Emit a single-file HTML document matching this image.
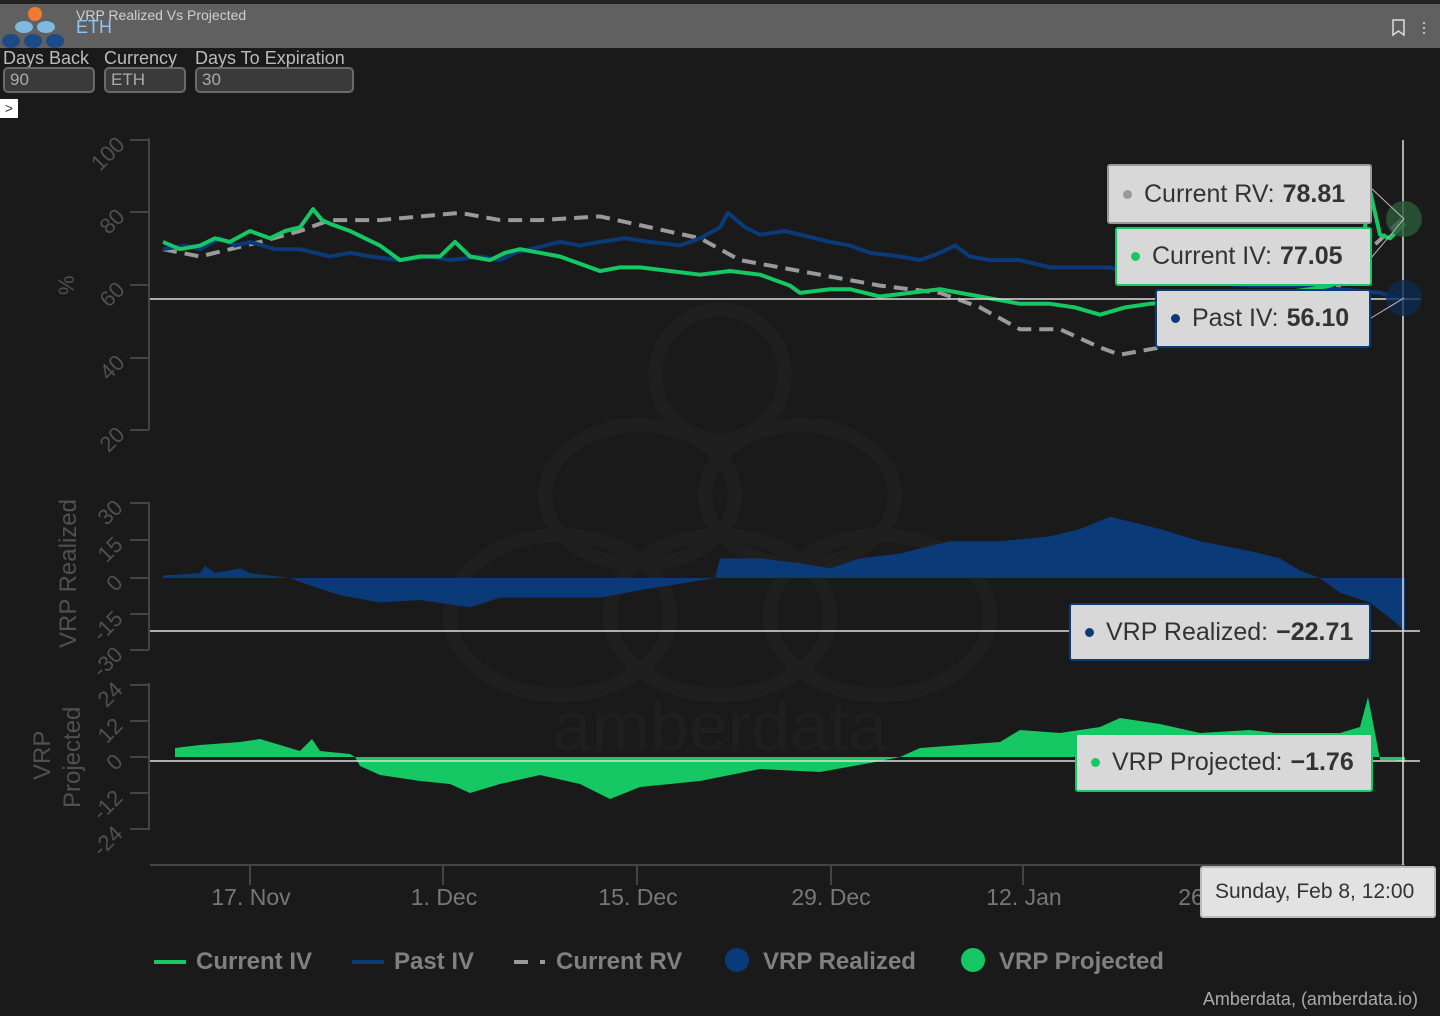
<!DOCTYPE html>
<html><head><meta charset="utf-8"><style>
html,body{margin:0;padding:0;width:1440px;height:1016px;overflow:hidden;background:#1a1a1a;font-family:"Liberation Sans",sans-serif}
.hdr{position:absolute;left:0;top:4px;width:1440px;height:44px;background:#606060}
.top{position:absolute;left:0;top:0;width:1440px;height:4px;background:#222}
.t1{position:absolute;left:76px;top:7px;font-size:14px;color:#d0d0d0}
.t2{position:absolute;left:76px;top:17px;font-size:18px;color:#8cc4f4}
.lbl{position:absolute;top:48px;font-size:18px;color:#bbb}
.inp{position:absolute;top:67px;height:26px;border:2px solid #6a6a6a;border-radius:5px;background:#3a3a3a;color:#aaa;font-size:17px;box-sizing:border-box;padding-left:5px;line-height:22px}
.arr{position:absolute;left:0;top:99px;width:18px;height:19px;background:#fff;color:#333;font-size:14px;text-align:center;line-height:18px}
.tip{position:absolute;background:#d8d8d8;border:2px solid #999;border-radius:3px;box-sizing:border-box;font-size:25px;color:#333;padding-left:14px;display:flex;align-items:center;white-space:nowrap;overflow:hidden}
.tip b{margin-left:8px}
.dot{display:inline-block;width:9px;height:9px;border-radius:50%;margin-right:12px;flex:none}
</style></head><body>
<div class="top"></div>
<div class="hdr"></div>
<svg style="position:absolute;left:0;top:0" width="70" height="50">
<circle cx="35" cy="14" r="7" fill="#f07b30"/>
<ellipse cx="24" cy="27" rx="9" ry="6" fill="#7fb8e0"/><ellipse cx="46" cy="27" rx="9" ry="6" fill="#7fb8e0"/>
<ellipse cx="11" cy="41" rx="9" ry="7" fill="#1c4a86"/><ellipse cx="33" cy="41" rx="9" ry="7" fill="#1c4a86"/><ellipse cx="55" cy="41" rx="9" ry="7" fill="#1c4a86"/>
</svg>
<div class="t1">VRP Realized Vs Projected</div>
<div class="t2">ETH</div>
<svg style="position:absolute;left:1390px;top:18px" width="40" height="20"><path d="M3 2h11v15l-5.5-4-5.5 4z" fill="none" stroke="#ddd" stroke-width="1.5"/><circle cx="34" cy="5" r="1" fill="#ddd"/><circle cx="34" cy="10" r="1" fill="#ddd"/><circle cx="34" cy="15" r="1" fill="#ddd"/></svg>
<div class="lbl" style="left:3px">Days Back</div>
<div class="lbl" style="left:104px">Currency</div>
<div class="lbl" style="left:195px">Days To Expiration</div>
<div class="inp" style="left:3px;width:92px">90</div>
<div class="inp" style="left:104px;width:82px">ETH</div>
<div class="inp" style="left:195px;width:159px">30</div>
<div class="arr">&gt;</div>

<svg style="position:absolute;left:0;top:0" width="1440" height="1016">
<g fill="none" stroke="#1f1f1f" stroke-width="14">
<circle cx="720" cy="375" r="65"/><ellipse cx="640" cy="495" rx="95" ry="70"/><ellipse cx="800" cy="495" rx="95" ry="70"/>
<ellipse cx="560" cy="615" rx="110" ry="80"/><ellipse cx="720" cy="615" rx="110" ry="80"/><ellipse cx="880" cy="615" rx="110" ry="80"/>
</g>
<text x="720" y="750" font-size="70" fill="#1f1f1f" text-anchor="middle" font-family="Liberation Sans">amberdata</text>
<g stroke="#444" stroke-width="2" fill="none">
<path d="M149 138V430M130 140H149M130 212H149M130 285H149M130 358H149M130 430H149"/>
<path d="M149 502V650M130 503H149M130 540H149M130 578H149M130 614H149M130 650H149"/>
<path d="M149 683V830M130 685H149M130 721H149M130 757H149M130 793H149M130 829H149"/>
<path d="M150 865H1405M250 865V885M443 865V885M637 865V885M831 865V885M1023 865V885M1215 865V885"/>
</g>
<g fill="#505050" font-size="22" font-family="Liberation Sans" text-anchor="end">
<text transform="translate(126,146) rotate(-45)">100</text>
<text transform="translate(126,218) rotate(-45)">80</text>
<text transform="translate(126,291) rotate(-45)">60</text>
<text transform="translate(126,364) rotate(-45)">40</text>
<text transform="translate(126,436) rotate(-45)">20</text>
<text transform="translate(124,509) rotate(-45)">30</text>
<text transform="translate(124,546) rotate(-45)">15</text>
<text transform="translate(124,584) rotate(-45)">0</text>
<text transform="translate(124,620) rotate(-45)">-15</text>
<text transform="translate(124,656) rotate(-45)">-30</text>
<text transform="translate(124,691) rotate(-45)">24</text>
<text transform="translate(124,727) rotate(-45)">12</text>
<text transform="translate(124,763) rotate(-45)">0</text>
<text transform="translate(124,799) rotate(-45)">-12</text>
<text transform="translate(124,835) rotate(-45)">-24</text>
</g>
<g fill="#505050" font-size="24" font-family="Liberation Sans">
<text transform="translate(74,295) rotate(-90)" font-size="22">%</text>
<text transform="translate(76,648) rotate(-90)">VRP Realized</text>
<text transform="translate(50,780) rotate(-90)">VRP</text>
<text transform="translate(80,808) rotate(-90)">Projected</text>
</g>
<g fill="#777" font-size="23" text-anchor="middle">
<text x="251" y="905">17. Nov</text><text x="444" y="905">1. Dec</text><text x="638" y="905">15. Dec</text><text x="831" y="905">29. Dec</text><text x="1024" y="905">12. Jan</text><text x="1216" y="905">26. Jan</text>
</g>
<g transform="translate(0,578) scale(1,-2.45)">
<polygon fill="#0a3a78" points="163,0 163,1 200,2 205,5 215,2 240,4 250,2 290,0 310,-3 340,-7 380,-10 420,-9 470,-12 500,-8 540,-8 600,-8 640,-5 700,-1 715,0 720,8 760,8 800,6 830,4 860,8 900,10 950,15 1000,15 1050,17 1080,20 1110,25 1140,22 1160,20 1200,15 1250,11 1280,8 1300,3 1320,0 1340,-6 1370,-10 1395,-18 1405,-22 1405,0"/>
</g>
<g transform="translate(0,757) scale(1,-3)">
<polygon fill="#16c864" points="175,0 175,3 200,4 240,5 260,6 300,2 312,6 320,2 350,1 355,0 360,-3 380,-6 420,-8 450,-9 470,-12 500,-9 540,-6 580,-9 610,-14 640,-10 700,-8 760,-4 820,-5 870,-2 900,0 920,3 960,4 1000,5 1020,9 1060,8 1100,10 1120,13 1160,11 1200,8 1250,9 1300,7 1340,8 1360,10 1368,20 1375,8 1380,-1 1395,-1 1405,-1.8 1405,0"/>
</g>
<g transform="translate(0,504) scale(1,-3.64)" fill="none" stroke-width="4" stroke-linejoin="round">
<polyline vector-effect="non-scaling-stroke" stroke="#9a9a9a" stroke-dasharray="14,8" points="163,70 200,68 260,72 300,75 330,78 380,78 420,79 460,80 500,78 540,78 600,79 650,76 700,73 740,67 800,64 880,60 940,58 980,54 1020,48 1060,48 1100,43 1120,41 1160,43 1200,48 1260,52 1330,57 1370,70 1405,79"/>
<polyline vector-effect="non-scaling-stroke" stroke="#0a3a78" points="163,70 185,71 200,70 220,73 235,71 250,72 275,70 300,70 330,68 350,69 370,68 400,67 430,68 450,67 480,68 500,67 515,69 530,70 560,72 580,71 600,72 625,73 650,72 680,71 700,73 720,76 728,80 745,76 760,74 785,75 800,74 830,72 850,71 870,69 900,68 920,67 940,69 955,71 970,68 990,67 1020,67 1050,65 1080,65 1110,65 1130,63 1150,61 1200,61 1250,60 1300,60 1340,59 1380,58 1405,56"/>
<polyline vector-effect="non-scaling-stroke" stroke="#16c864" points="163,72 180,70 200,71 215,73 230,72 250,75 270,73 285,75 300,76 313,81 322,78 330,77 350,75 365,73 380,71 400,67 420,68 440,68 455,72 470,68 490,67 505,69 520,70 540,69 560,68 580,66 600,64 620,65 640,65 670,64 700,63 730,64 760,63 790,60 800,58 830,59 850,59 880,57 910,58 940,59 960,58 980,57 1000,56 1020,55 1050,55 1075,54 1100,52 1125,54 1150,55 1200,56 1240,57 1280,58 1310,59 1330,60 1350,62 1360,66 1370,86 1380,74 1390,73 1405,77"/>
</g>
<path d="M150 299H1420M150 631H1420M150 761H1420M1403 140V865" stroke="#ddd" stroke-width="1.5"/>
<circle cx="1404" cy="219" r="18" fill="#2a5a3a" opacity="0.8"/>
<circle cx="1404" cy="298" r="18" fill="#0a2a50" opacity="0.8"/>
<path d="M1371 188L1404 219M1371 258L1404 219M1371 318L1404 298" stroke="#bbb" stroke-width="1"/>
</svg>

<div class="tip" style="left:1107px;top:164px;width:265px;height:60px"><span class="dot" style="background:#999"></span>Current RV:<b>78.81</b></div>
<div class="tip" style="left:1115px;top:227px;width:257px;height:59px;border-color:#16c864"><span class="dot" style="background:#16c864"></span>Current IV:<b>77.05</b></div>
<div class="tip" style="left:1155px;top:289px;width:216px;height:59px;border-color:#0a3a78"><span class="dot" style="background:#0a3a78"></span>Past IV:<b>56.10</b></div>
<div class="tip" style="left:1069px;top:603px;width:302px;height:58px;border-color:#0a3a78"><span class="dot" style="background:#0a3a78"></span>VRP Realized:<b>−22.71</b></div>
<div class="tip" style="left:1075px;top:733px;width:298px;height:59px;border-color:#16c864"><span class="dot" style="background:#16c864"></span>VRP Projected:<b>−1.76</b></div>
<div class="tip" style="left:1200px;top:866px;width:236px;height:52px;background:#e2e2e2;border-color:#bbb;font-size:21px;padding-left:13px">Sunday, Feb 8, 12:00</div>

<svg style="position:absolute;left:0;top:930px" width="1440" height="86">
<g font-family="'Liberation Sans Narrow','Liberation Sans',sans-serif" font-weight="bold" font-size="24" fill="#808080">
<path d="M154 32H186" stroke="#16c864" stroke-width="4"/><text x="196" y="39">Current IV</text>
<path d="M352 32H384" stroke="#0a3a78" stroke-width="4"/><text x="394" y="39">Past IV</text>
<path d="M514 32H528M540 32H545" stroke="#9a9a9a" stroke-width="4"/><text x="556" y="39">Current RV</text>
<circle cx="737" cy="30" r="12" fill="#0a3a78"/><text x="763" y="39">VRP Realized</text>
<circle cx="973" cy="30" r="12" fill="#16c864"/><text x="999" y="39">VRP Projected</text>
</g>
<text x="1418" y="75" text-anchor="end" font-size="18" fill="#aaa" font-family="Liberation Sans">Amberdata, (amberdata.io)</text>
</svg>
</body></html>
